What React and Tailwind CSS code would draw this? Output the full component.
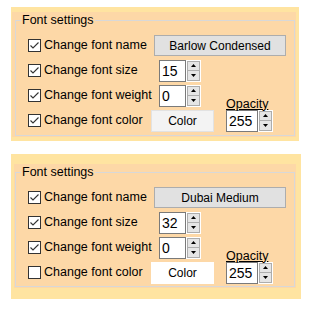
import React from "react";

function CheckBox({ checked }) {
    return (
        <div className="w-[13px] h-[13px] border border-[#333333] bg-white flex items-center justify-center shrink-0">
            {checked ? (
                <svg width="11" height="11" viewBox="0 0 11 11">
                    <polyline points="1.5,5.5 4,8 9.5,2.5" fill="none" stroke="#333333" strokeWidth="1.1" />
                </svg>
            ) : null}
        </div>
    );
}

function SpinBox({ value, width }) {
    return (
        <div className="flex h-[22px]">
            <div className={`${width} h-[22px] border border-[#7a7a7a] bg-white pl-[2px] flex items-center text-[14px] text-black leading-none`}>
                {value}
            </div>
            <div className="w-[15px] h-[22px] bg-white p-[1px] flex flex-col">
                <div className="flex-1 border border-[#adadad] bg-[#e5e5e5] flex items-center justify-center">
                    <svg width="5" height="3" viewBox="0 0 5 3"><polygon points="2.5,0 5,3 0,3" fill="#000" /></svg>
                </div>
                <div className="flex-1 border border-[#adadad] border-t-0 bg-[#e5e5e5] flex items-center justify-center">
                    <svg width="5" height="3" viewBox="0 0 5 3"><polygon points="0,0 5,0 2.5,3" fill="#000" /></svg>
                </div>
            </div>
        </div>
    );
}

function Label({ checked, text, width }) {
    return (
        <div className={`${width} flex items-center shrink-0`}>
            <CheckBox checked={checked} />
            <span className="ml-[3px] text-[12.5px] text-black whitespace-nowrap">{text}</span>
        </div>
    );
}

function FontSettings({ outer, inner, fontName, size, colorChecked, colorBtn }) {
    return (
        <div className={`ml-[11px] bg-[#ffe4a1] ${outer}`}>
            <div className={`h-full bg-[#fdd8a7] ${inner}`}>
                <div className="h-full relative border border-[#d8d8d8] pl-[12px] pt-[12px]">
                    <span className="absolute top-[-8px] left-[5px] px-[1px] bg-[#fdd8a7] text-[12.5px] leading-[15px] text-black">
                        Font settings
                    </span>
                    <div className="flex items-center h-[25px]">
                        <Label checked text="Change font name" width="w-[126px]" />
                        <div className="w-[132px] h-[21px] bg-[#e1e1e1] border border-[#adadad] flex items-center justify-center text-[12px] text-black">
                            {fontName}
                        </div>
                    </div>
                    <div className="flex items-center h-[25px]">
                        <Label checked text="Change font size" width="w-[131px]" />
                        <SpinBox value={size} width="w-[27px]" />
                    </div>
                    <div className="flex items-center h-[25px]">
                        <Label checked text="Change font weight" width="w-[131px]" />
                        <SpinBox value="0" width="w-[27px]" />
                    </div>
                    <div className="flex items-center h-[25px]">
                        <Label checked={colorChecked} text="Change font color" width="w-[123px]" />
                        <div className={`w-[63px] h-[22px] flex items-center justify-center text-[12px] text-black ${colorBtn}`}>
                            Color
                        </div>
                        <div className="relative ml-[12px]">
                            <span className="absolute top-[-12px] left-0 text-[12.5px] leading-[13px] text-black underline underline-offset-[1px] whitespace-nowrap">
                                Opacity
                            </span>
                            <SpinBox value="255" width="w-[32px]" />
                        </div>
                    </div>
                </div>
            </div>
        </div>
    );
}

export default function App() {
    return (
        <div className="w-[329px] h-[318px] bg-white pt-[7px] font-['Liberation_Sans',Arial,sans-serif]">
            <FontSettings
                outer="w-[288px] h-[134px] pt-[5px] pl-[1px] pr-[3px] pb-[4px]"
                inner="pl-[3px] pt-[8px] pr-[1px] pb-[1px]"
                fontName="Barlow Condensed"
                size="15"
                colorChecked
                colorBtn="bg-[#f3f3f3] border border-[#e2e2e2]"
            />
            <div className="h-[13px]" />
            <FontSettings
                outer="w-[290px] h-[145px] pt-[10px] pl-[3px] pr-[5px] pb-[11px]"
                inner="pl-[1px] pt-[8px] pr-[1px] pb-[1px]"
                fontName="Dubai Medium"
                size="32"
                colorChecked={false}
                colorBtn="bg-white"
            />
        </div>
    );
}
